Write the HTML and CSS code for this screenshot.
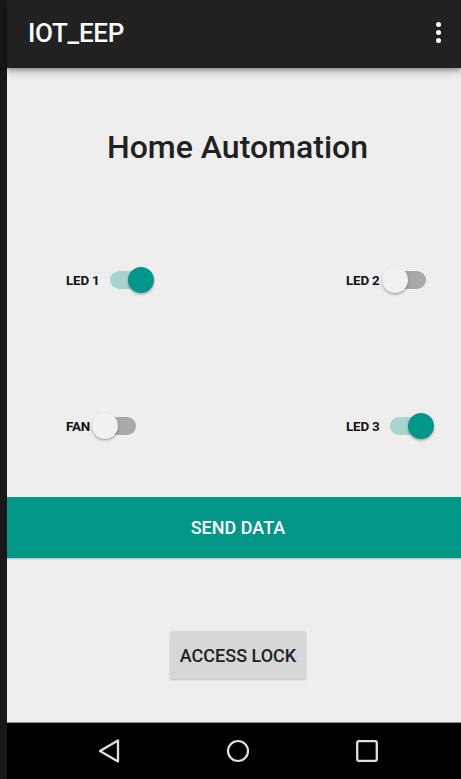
FILE: index.html
```html
<!DOCTYPE html>
<html>
<head>
<meta charset="utf-8">
<link rel="stylesheet" href="styles.css">
</head>
<body>
<div class="device">
  <div class="edge"></div>
  <div class="screen">
    <header class="appbar">
      <span class="appbar-title">IOT_EEP</span>
      <span class="overflow"><i></i><i></i><i></i></span>
    </header>
    <main class="content">
      <h1 class="heading">Home Automation</h1>
      <div class="grid row-one">
        <div class="cell left">
          <span class="label">LED 1</span>
          <span class="switch on"><span class="track"></span><span class="thumb"></span></span>
        </div>
        <div class="cell right">
          <span class="label">LED 2</span>
          <span class="switch off"><span class="track"></span><span class="thumb"></span></span>
        </div>
      </div>
      <div class="grid row-two">
        <div class="cell left">
          <span class="label">FAN</span>
          <span class="switch off"><span class="track"></span><span class="thumb"></span></span>
        </div>
        <div class="cell right">
          <span class="label">LED 3</span>
          <span class="switch on"><span class="track"></span><span class="thumb"></span></span>
        </div>
      </div>
      <div class="send-bar">SEND DATA</div>
      <div class="lock-wrap"><button class="lock-btn">ACCESS LOCK</button></div>
    </main>
    <nav class="navbar">
      <svg class="nav-icon" width="24" height="26" viewBox="0 0 24 26"><path d="M3 13 L21 2.5 L21 23.5 Z" fill="none" stroke="#e0e0e0" stroke-width="2.3" stroke-linejoin="round"/></svg>
      <svg class="nav-icon" width="24" height="24" viewBox="0 0 24 24"><circle cx="12" cy="12" r="10" fill="none" stroke="#e0e0e0" stroke-width="2.2"/></svg>
      <svg class="nav-icon" width="24" height="24" viewBox="0 0 24 24"><rect x="2.2" y="2.2" width="19.6" height="19.6" rx="1.8" fill="none" stroke="#e0e0e0" stroke-width="2.3"/></svg>
    </nav>
  </div>
</div>
</body>
</html>
```

FILE: styles.css
```css
* { box-sizing: border-box; }
html, body { margin: 0; padding: 0; }
body {
  width: 461px;
  height: 779px;
  overflow: hidden;
  font-family: Roboto, "Noto Sans", Arial, sans-serif;
  background: #eeeeee;
}
.device {
  display: flex;
  height: 779px;
}
.edge {
  width: 7px;
  flex: none;
  background: #181818;
}
.screen {
  flex: 1;
  display: flex;
  flex-direction: column;
  height: 779px;
}
.appbar {
  height: 68px;
  flex: none;
  background: #212121;
  display: flex;
  align-items: center;
  justify-content: space-between;
  padding: 0 20px 0 21px;
  position: relative;
  z-index: 2;
  box-shadow: 0 2px 5px rgba(0,0,0,0.35), 0 4px 10px rgba(0,0,0,0.15);
}
.appbar-title {
  color: #ffffff;
  font-size: 26px;
  font-weight: 500;
  letter-spacing: -0.3px;
  margin-top: -2px;
}
.overflow {
  display: flex;
  flex-direction: column;
  gap: 3px;
  margin-top: -3px;
}
.overflow i {
  display: block;
  width: 5px;
  height: 5px;
  border-radius: 50%;
  background: #ffffff;
}
.content {
  flex: 1;
  background: #eeeeee;
  display: flex;
  flex-direction: column;
}
.heading {
  margin: 60px 0 0;
  padding-left: 7px;
  text-align: center;
  font-size: 32px;
  line-height: 38px;
  font-weight: 500;
  color: #212121;
}
.grid {
  display: grid;
  grid-template-columns: 227px 227px;
  height: 26px;
}
.row-one { margin-top: 101px; }
.row-two { margin-top: 120px; }
.cell {
  display: flex;
  align-items: center;
}
.cell.left { padding-left: 59px; }
.cell.right { padding-left: 112px; }
.label {
  font-size: 13.4px;
  font-weight: 700;
  color: #111111;
  letter-spacing: -0.2px;
}
.switch {
  position: relative;
  width: 48px;
  height: 26px;
  flex: none;
}
.switch.on { margin-left: 6px; }
.switch.off { margin-left: 2px; }
.track {
  position: absolute;
  left: 4px;
  top: 4px;
  width: 40px;
  height: 18px;
  border-radius: 9px;
}
.thumb {
  position: absolute;
  top: 0;
  width: 26px;
  height: 26px;
  border-radius: 50%;
  box-shadow: 0 1.5px 2.5px rgba(0,0,0,0.3);
}
.switch.on .track { background: #a7d4cf; }
.switch.on .thumb { left: 22px; background: #009688; }
.switch.off .track { background: #a8a8a8; }
.switch.off .thumb { left: 0; background: #f1f1f1; }
.send-bar {
  margin-top: 58px;
  height: 61px;
  background: #009688;
  color: #ffffff;
  display: flex;
  align-items: center;
  justify-content: center;
  padding-left: 8px;
  font-size: 18px;
  font-weight: 500;
  box-shadow: 0 1px 1.5px rgba(0,0,0,0.25);
}
.lock-wrap {
  margin-top: 73px;
  display: flex;
  justify-content: center;
  padding-left: 8px;
}
.lock-btn {
  width: 136px;
  height: 48px;
  border: none;
  border-radius: 2px;
  background: #d6d7d7;
  color: #222222;
  font-family: Roboto, "Noto Sans", Arial, sans-serif;
  font-size: 18px;
  font-weight: 500;
  padding: 0;
  box-shadow: 0 1px 2px rgba(0,0,0,0.2);
}
.navbar {
  height: 57px;
  flex: none;
  background: #000000;
  border-top: 1px solid #8a8a8a;
  display: flex;
  align-items: center;
  justify-content: space-between;
  padding: 0 82px 0 90px;
}
.nav-icon { display: block; }
```
